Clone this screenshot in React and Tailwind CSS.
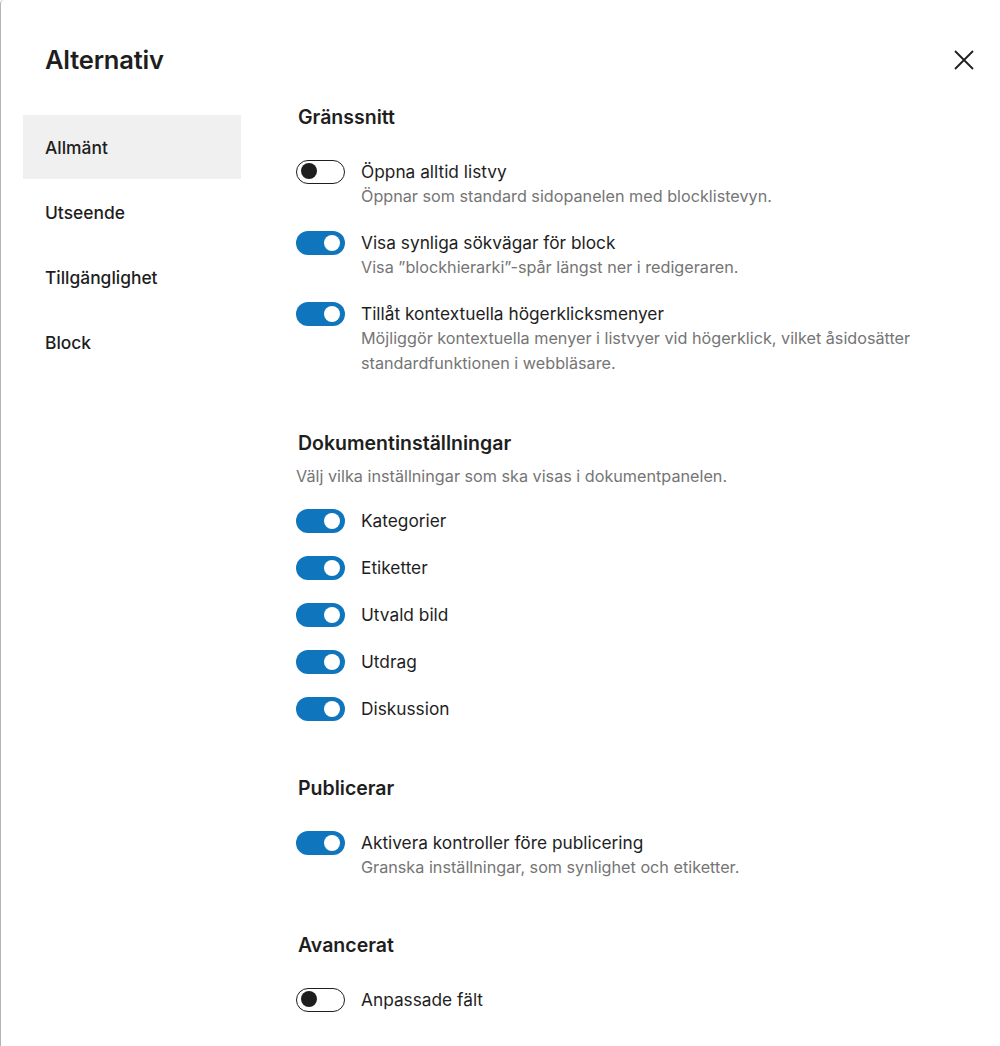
import React from "react";

function Toggle({ on }) {
  if (on) {
    return (
      <span className="relative inline-block w-[49px] h-[24px] rounded-full bg-[#0f76bd] shrink-0">
        <span className="absolute right-[5px] top-[4px] w-[16px] h-[16px] rounded-full bg-white" />
      </span>
    );
  }
  return (
    <span className="relative inline-block w-[49px] h-[24px] rounded-full border-[1.5px] border-[#1e1e1e] bg-white shrink-0">
      <span className="absolute left-[3.5px] top-[2.5px] w-[16px] h-[16px] rounded-full bg-[#1e1e1e]" />
    </span>
  );
}

function Row({ on, label, desc }) {
  return (
    <div className="flex items-start gap-[16px]">
      <div className="h-[25px] flex items-center">
        <Toggle on={on} />
      </div>
      <div>
        <div className="text-[17.3px] leading-[25px] text-[#1e1e1e]">{label}</div>
        {desc && (
          <div className="text-[16.2px] leading-[25px] text-[#757575]">{desc}</div>
        )}
      </div>
    </div>
  );
}

function Heading({ children }) {
  return (
    <h2 className="ml-[2px] text-[19.5px] leading-[28px] font-semibold text-[#1e1e1e]">
      {children}
    </h2>
  );
}

export default function App() {
  const navItems = ["Allmänt", "Utseende", "Tillgänglighet", "Block"];
  return (
    <div
      className="w-[1000px] h-[1046px] bg-white overflow-hidden"
      style={{ fontFamily: "Inter, 'Noto Sans', sans-serif" }}
    >
      <div className="h-full border-l border-[#b4b4b4] rounded-tl-[4px] flex flex-col">
        <div className="flex items-center justify-between pl-[44px] pr-[24px] pt-[45px] h-[76px]">
          <h1 className="text-[25.5px] font-semibold text-[#1e1e1e] leading-[30px] tracking-[-0.2px] mt-[-2px]">
            Alternativ
          </h1>
          <svg width="24" height="24" viewBox="0 0 24 24" className="mt-[-2px]">
            <path
              d="M3 3 L21 21 M21 3 L3 21"
              stroke="#1e1e1e"
              strokeWidth="1.8"
              fill="none"
            />
          </svg>
        </div>
        <div className="flex flex-1">
          <nav className="w-[240px] pl-[22px] pt-[39px] shrink-0">
            {navItems.map((item, i) => (
              <div
                key={item}
                className={`flex items-center pl-[22px] pt-[2px] text-[17.4px] font-medium text-[#1e1e1e] ${
                  i === 0 ? "bg-[#f0f0f0] h-[64px] mb-[1px]" : "h-[65px]"
                }`}
              >
                {item}
              </div>
            ))}
          </nav>
          <main className="flex-1 pl-[55px] pt-[27px]">
            <section>
              <Heading>Gränssnitt</Heading>
              <div className="mt-[28px] flex flex-col gap-[21px]">
                <Row
                  on={false}
                  label="Öppna alltid listvy"
                  desc="Öppnar som standard sidopanelen med blocklistevyn."
                />
                <Row
                  on
                  label="Visa synliga sökvägar för block"
                  desc="Visa ”blockhierarki”-spår längst ner i redigeraren."
                />
                <Row
                  on
                  label="Tillåt kontextuella högerklicksmenyer"
                  desc={
                    <>
                      Möjliggör kontextuella menyer i listvyer vid högerklick, vilket åsidosätter
                      <br />
                      standardfunktionen i webbläsare.
                    </>
                  }
                />
              </div>
            </section>
            <section className="mt-[53px]">
              <Heading>Dokumentinställningar</Heading>
              <div className="mt-[7px] text-[16.2px] leading-[25px] text-[#757575]">
                Välj vilka inställningar som ska visas i dokumentpanelen.
              </div>
              <div className="mt-[19px] flex flex-col gap-[22px]">
                <Row on label="Kategorier" />
                <Row on label="Etiketter" />
                <Row on label="Utvald bild" />
                <Row on label="Utdrag" />
                <Row on label="Diskussion" />
              </div>
            </section>
            <section className="mt-[53px]">
              <Heading>Publicerar</Heading>
              <div className="mt-[28px] flex flex-col gap-[21px]">
                <Row
                  on
                  label="Aktivera kontroller före publicering"
                  desc="Granska inställningar, som synlighet och etiketter."
                />
              </div>
            </section>
            <section className="mt-[51px]">
              <Heading>Avancerat</Heading>
              <div className="mt-[28px] flex flex-col gap-[21px]">
                <Row on={false} label="Anpassade fält" />
              </div>
            </section>
          </main>
        </div>
      </div>
    </div>
  );
}
